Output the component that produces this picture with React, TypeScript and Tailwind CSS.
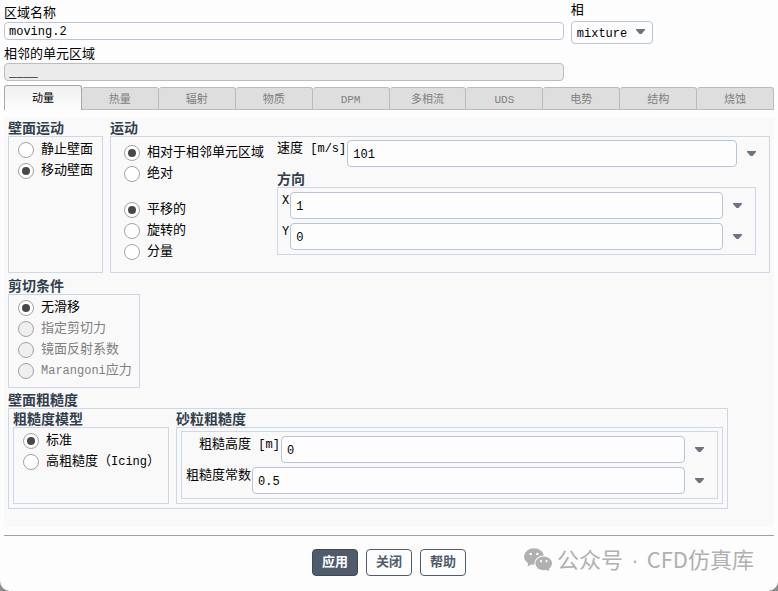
import React, { useState } from "react"
import clsx from "clsx"

const tabs = ["动量", "热量", "辐射", "物质", "DPM", "多相流", "UDS", "电势", "结构", "烧蚀"]

const Arrow = ({ className }: { className?: string }) => (
    <svg
        viewBox="0 0 9 5"
        width="9"
        height="5"
        aria-hidden="true"
        className={clsx("text-[#6b7480]", className)}
    >
        <path d="M0 0h9v1L5.5 5h-2L0 1z" fill="currentColor" />
    </svg>
)

const WeChatIcon = () => (
    <svg viewBox="0 0 28 23" width="28" height="23" aria-hidden="true">
        <g fill="currentColor">
            <path d="M4 14.5 3.6 18.6 8.5 16z" />
            <ellipse cx="10" cy="8.5" rx="10" ry="8.3" />
        </g>
        <ellipse cx="19.7" cy="15.3" rx="9.3" ry="7.9" fill="#fdfdfd" />
        <g fill="currentColor">
            <path d="M21 21.5 25.2 23 25 19z" />
            <ellipse cx="19.7" cy="15.3" rx="8.3" ry="6.9" />
        </g>
        <g fill="#fdfdfd">
            <circle cx="6.7" cy="6" r="1.3" />
            <circle cx="13.3" cy="6" r="1.3" />
            <circle cx="17" cy="13.2" r="1.1" />
            <circle cx="22.5" cy="13.2" r="1.1" />
        </g>
    </svg>
)

// latin runs are set one step smaller than the chinese text around them
const Latin = ({ children }: { children: React.ReactNode }) => (
    <span className="text-xs leading-none whitespace-pre">{children}</span>
)

type GroupProps = {
    title: string
    className?: string
    boxClassName?: string
    children: React.ReactNode
}

const Group = ({ title, className, boxClassName, children }: GroupProps) => (
    <section className={clsx("flex flex-col", className)}>
        <h2 className="pt-1 text-sm leading-[14px] font-bold text-[#343f4d]">{title}</h2>
        <div className={clsx("grow border border-[#cfd6e5]", boxClassName)}>
            {children}
        </div>
    </section>
)

type RadioOption = {
    value: string
    label: React.ReactNode
    disabled?: boolean
}

type RadioListProps = {
    name: string
    options: RadioOption[]
    value: string
    onChange: (value: string) => void
}

const RadioList = ({ name, options, value, onChange }: RadioListProps) => (
    <div role="radiogroup" className="flex flex-col">
        {options.map((option) => (
            <label
                key={option.value}
                className={clsx(
                    "flex h-[21px] items-center gap-[7px] whitespace-nowrap",
                    option.disabled && "text-[#808080]"
                )}
            >
                <input
                    type="radio"
                    name={name}
                    checked={value === option.value}
                    disabled={option.disabled}
                    onChange={() => onChange(option.value)}
                    className="grid size-4 shrink-0 appearance-none place-content-center rounded-full border border-[#a3a3a3] bg-white before:size-2 before:rounded-full checked:before:bg-[#484848] disabled:bg-[#efefef]"
                />
                <span>{option.label}</span>
            </label>
        ))}
    </div>
)

type FieldProps = {
    id: string
    label: React.ReactNode
    initial: string
    className?: string
}

const Field = ({ id, label, initial, className }: FieldProps) => {
    const [value, setValue] = useState<string>(initial)
    return (
        <div className={clsx("flex gap-px", className)}>
            <label htmlFor={id} className="leading-[18px] whitespace-nowrap">
                {label}
            </label>
            <input
                id={id}
                type="text"
                value={value}
                onChange={(event) => setValue(event.target.value)}
                className="h-[27px] min-w-0 grow rounded border border-[#b9c4d5] bg-[#fdfdfd] px-[5px] pt-0.5 text-xs focus:outline-none"
            />
            <button
                type="button"
                aria-label="选项"
                className="-ml-px flex w-7 shrink-0 items-center justify-center"
            >
                <Arrow />
            </button>
        </div>
    )
}

export default function App() {
    const [zoneName, setZoneName] = useState<string>("moving.2")
    const [activeTab, setActiveTab] = useState<string>("动量")
    const [wallMotion, setWallMotion] = useState<string>("moving")
    const [frame, setFrame] = useState<string>("relative")
    const [motion, setMotion] = useState<string>("translational")
    const [shear, setShear] = useState<string>("no-slip")
    const [roughness, setRoughness] = useState<string>("standard")

    return (
        <div className="min-h-screen bg-[#8c8c8c]">
            <div className="flex min-h-screen flex-col rounded-b-[10px] bg-[#fdfdfd] px-1 font-['Liberation_Mono','Noto_Sans_CJK_SC',monospace] text-[13px] leading-[18px] text-black">
                <header className="flex items-start gap-[7px]">
                    <div className="flex w-[72.7%] flex-col pt-1.5">
                        <label htmlFor="zone" className="leading-4">
                            区域名称
                        </label>
                        <input
                            id="zone"
                            type="text"
                            value={zoneName}
                            onChange={(event) => setZoneName(event.target.value)}
                            className="h-[18px] rounded border border-[#b9c4d5] px-1 pt-0.5 text-xs focus:outline-none"
                        />
                        <label htmlFor="adjacent" className="mt-[7px] leading-4">
                            相邻的单元区域
                        </label>
                        <input
                            id="adjacent"
                            type="text"
                            value="____"
                            readOnly
                            className="h-[18px] rounded border border-[#bdbdbd] bg-[#ebebeb] px-1 pt-0.5 text-xs focus:outline-none"
                        />
                    </div>
                    <div className="flex flex-col">
                        <label htmlFor="phase" className="leading-[21px]">
                            相
                        </label>
                        <div className="relative">
                            <select
                                id="phase"
                                className="h-[23px] w-[82px] appearance-none rounded border border-[#b9c4d5] pt-0.5 pl-[5px] text-xs"
                            >
                                <option>mixture</option>
                            </select>
                            <Arrow className="pointer-events-none absolute top-2 right-2" />
                        </div>
                    </div>
                </header>

                <nav role="tablist" className="mt-1 flex items-end text-[11px]">
                    {tabs.map((tab) => (
                        <button
                            key={tab}
                            type="button"
                            role="tab"
                            aria-selected={activeTab === tab}
                            onClick={() => setActiveTab(tab)}
                            className={clsx(
                                "flex-1 rounded-t-[3px] border-t border-r pt-0.5",
                                activeTab === tab
                                    ? "h-[25px] border-l border-[#a8a8a8] bg-linear-to-b from-[#f0f0f0] to-[#fdfdfd] text-black"
                                    : "h-[23px] border-b border-[#bbbbbb] bg-[#dedede] text-[#808080]"
                            )}
                        >
                            {tab}
                        </button>
                    ))}
                </nav>

                <main className="mt-2 bg-[#f9f9f9] px-1 pb-[18px]">
                    <div className="flex gap-[7px]">
                        <Group title="壁面运动" boxClassName="px-[9px] pt-0.5">
                            <RadioList
                                name="wall-motion"
                                value={wallMotion}
                                onChange={setWallMotion}
                                options={[
                                    { value: "stationary", label: "静止壁面" },
                                    { value: "moving", label: "移动壁面" }
                                ]}
                            />
                        </Group>
                        <Group
                            title="运动"
                            className="min-w-0 grow"
                            boxClassName="flex gap-[13px] pr-1 pl-[13px]"
                        >
                            <div className="flex flex-col gap-[15px] pt-[5px] pb-2.5">
                                <RadioList
                                    name="frame"
                                    value={frame}
                                    onChange={setFrame}
                                    options={[
                                        { value: "relative", label: "相对于相邻单元区域" },
                                        { value: "absolute", label: "绝对" }
                                    ]}
                                />
                                <RadioList
                                    name="motion"
                                    value={motion}
                                    onChange={setMotion}
                                    options={[
                                        { value: "translational", label: "平移的" },
                                        { value: "rotational", label: "旋转的" },
                                        { value: "components", label: "分量" }
                                    ]}
                                />
                            </div>
                            <div className="min-w-0 grow pt-[3px]">
                                <Field
                                    id="speed"
                                    label={
                                        <>
                                            速度<Latin> [m/s]</Latin>
                                        </>
                                    }
                                    initial="101"
                                />
                                <Group
                                    title="方向"
                                    className="mt-0.5 mr-[9px]"
                                    boxClassName="flex flex-col gap-1 p-1"
                                >
                                    <Field id="dir-x" label={<Latin>X</Latin>} initial="1" />
                                    <Field id="dir-y" label={<Latin>Y</Latin>} initial="0" />
                                </Group>
                            </div>
                        </Group>
                    </div>

                    <div className="mt-[3px] flex">
                        <Group title="剪切条件" boxClassName="pt-0.5 pr-[7px] pb-1.5 pl-[9px]">
                            <RadioList
                                name="shear"
                                value={shear}
                                onChange={setShear}
                                options={[
                                    { value: "no-slip", label: "无滑移" },
                                    { value: "specified", label: "指定剪切力", disabled: true },
                                    { value: "specularity", label: "镜面反射系数", disabled: true },
                                    {
                                        value: "marangoni",
                                        label: (
                                            <>
                                                <Latin>Marangoni</Latin>应力
                                            </>
                                        ),
                                        disabled: true
                                    }
                                ]}
                            />
                        </Group>
                    </div>

                    <Group
                        title="壁面粗糙度"
                        className="mt-0.5 mr-[42px]"
                        boxClassName="flex gap-[7px] px-1 pb-1"
                    >
                        <Group title="粗糙度模型" boxClassName="pt-0.5 pr-2 pl-[9px]">
                            <RadioList
                                name="roughness"
                                value={roughness}
                                onChange={setRoughness}
                                options={[
                                    { value: "standard", label: "标准" },
                                    {
                                        value: "icing",
                                        label: (
                                            <>
                                                高粗糙度（<Latin>Icing</Latin>）
                                            </>
                                        )
                                    }
                                ]}
                            />
                        </Group>
                        <Group
                            title="砂粒粗糙度"
                            className="min-w-0 grow"
                            boxClassName="px-1 pt-[3px] pb-1"
                        >
                            <div className="flex flex-col gap-1 border border-[#cfd6e5] p-1">
                                <Field
                                    id="height"
                                    className="pl-[13px]"
                                    label={
                                        <>
                                            粗糙高度<Latin> [m]</Latin>
                                        </>
                                    }
                                    initial="0"
                                />
                                <Field id="constant" label="粗糙度常数" initial="0.5" />
                            </div>
                        </Group>
                    </Group>
                </main>

                <footer className="relative mt-2 flex justify-center gap-2 border-t border-[#a0a0a0] pt-[13px] pb-[15px] text-[13px] font-bold text-[#505c6b]">
                    <button
                        type="button"
                        className="h-[27px] w-[46px] rounded border border-[#3f4a59] bg-[#505c6b] text-white"
                    >
                        应用
                    </button>
                    <button
                        type="button"
                        className="h-[27px] w-[46px] rounded border border-[#505c6b]"
                    >
                        关闭
                    </button>
                    <button
                        type="button"
                        className="h-[27px] w-[46px] rounded border border-[#505c6b]"
                    >
                        帮助
                    </button>
                    <div className="absolute top-1.5 right-5 flex items-center gap-[5px] font-['Noto_Sans_CJK_SC',sans-serif] text-[22px] leading-8 font-normal text-[#b0b0b0]">
                        <WeChatIcon />
                        <span className="whitespace-pre">
                            公众号
                            <span className="px-0.5 font-['Liberation_Sans',sans-serif]"> · </span>
                            CFD仿真库
                        </span>
                    </div>
                </footer>
            </div>
        </div>
    )
}
